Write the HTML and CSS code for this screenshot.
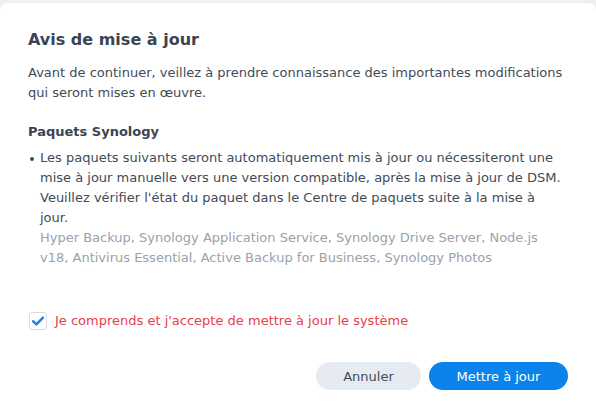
FILE: index.html
```html
<!DOCTYPE html>
<html lang="fr">
<head>
    <meta charset="UTF-8">
    <title>Avis de mise à jour</title>
    <link rel="stylesheet" href="styles.css">
</head>
<body>
    <div class="dialog">
        <h1>Avis de mise à jour</h1>
        <p class="intro">Avant de continuer, veillez à prendre connaissance des importantes modifications qui seront mises en œuvre.</p>

        <h2>Paquets Synology</h2>
        <ul class="notes">
            <li>
                Les paquets suivants seront automatiquement mis à jour ou nécessiteront une mise à jour manuelle vers une version compatible, après la mise à jour de DSM. Veuillez vérifier l'état du paquet dans le Centre de paquets suite à la mise à jour.
                <div class="pkgs">Hyper Backup, Synology Application Service, Synology Drive Server, Node.js v18, Antivirus Essential, Active Backup for Business, Synology Photos</div>
            </li>
        </ul>

        <label class="agree">
            <span class="box">
                <svg width="14" height="14" viewBox="0 0 14 14"><path d="M2 7.2 L5.4 10.4 L12 3.6" fill="none" stroke="#1a7fe6" stroke-width="2.4" stroke-linecap="round" stroke-linejoin="round"/></svg>
            </span>
            Je comprends et j'accepte de mettre à jour le système
        </label>

        <div class="actions">
            <button class="btn">Annuler</button>
            <button class="btn primary">Mettre à jour</button>
        </div>
    </div>
</body>
</html>
```

FILE: styles.css
```css
body {
    margin: 0;
    background: #efefef;
    font-family: 'DejaVu Sans', Verdana, sans-serif;
    font-size: 13px;
    color: #414b58;
}
.dialog {
    margin-top: 3px;
    height: 405px;
    box-sizing: border-box;
    background: #fff;
    border-radius: 8px 8px 0 0;
    padding: 27px 28px 0 28px;
}
h1 {
    margin: 0;
    font-size: 16px;
    line-height: 20px;
    font-weight: bold;
    color: #3b4452;
}
.intro {
    margin: 13px 0 0 0;
    line-height: 20px;
}
h2 {
    margin: 19px 0 0 0;
    font-size: 13px;
    line-height: 20px;
    font-weight: bold;
    color: #3b4452;
}
.notes {
    margin: 6px 4px 0 0;
    padding: 0 0 0 12px;
    line-height: 20px;
}
.notes li {
    list-style: none;
    position: relative;
}
.notes li::before {
    content: "";
    position: absolute;
    left: -10px;
    top: 9px;
    width: 4px;
    height: 4px;
    border-radius: 50%;
    background: #414b58;
}
.pkgs {
    color: #9ba1aa;
}
.agree {
    display: flex;
    align-items: center;
    gap: 8px;
    margin-top: 43px;
    color: #e8404a;
    line-height: 20px;
}
.box {
    width: 16px;
    height: 16px;
    border: 1px solid #d4dbe4;
    border-radius: 3px;
    display: flex;
    align-items: center;
    justify-content: center;
    margin-left: 1px;
}
.actions {
    display: flex;
    justify-content: flex-end;
    gap: 8px;
    margin-top: 31px;
}
.btn {
    height: 28px;
    width: 105px;
    border: none;
    border-radius: 14px;
    padding: 0;
    font-family: 'DejaVu Sans', Verdana, sans-serif;
    font-size: 13px;
    background: #e6ebf2;
    color: #414b58;
}
.primary {
    width: 139px;
    background: #0a83ec;
    color: #fff;
}
```
